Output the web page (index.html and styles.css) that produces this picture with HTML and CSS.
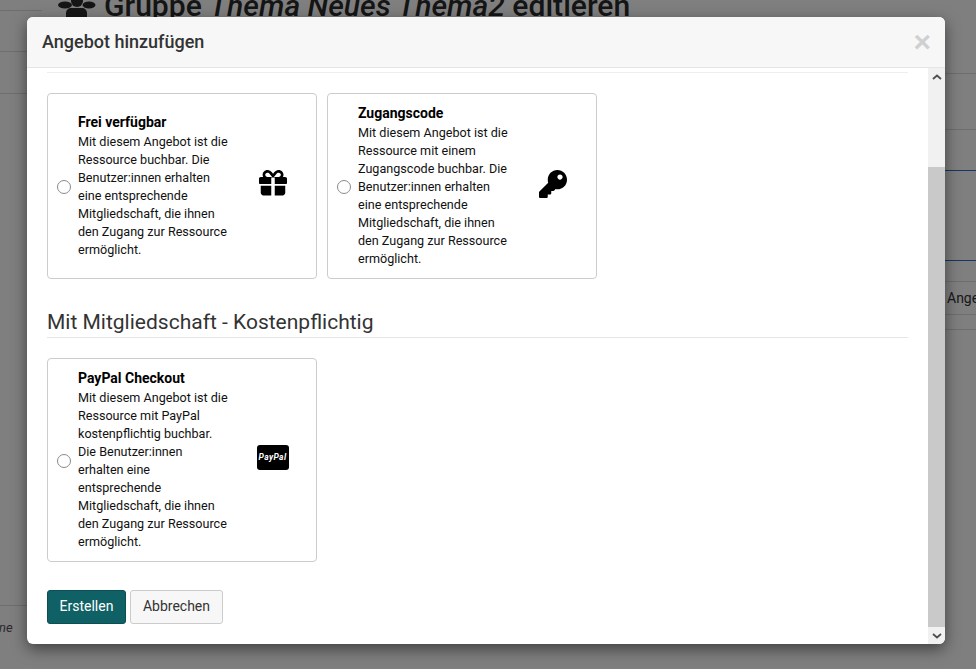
FILE: index.html
```html
<!DOCTYPE html>
<html lang="de">
<head>
<meta charset="utf-8">
<title>Angebot hinzufügen</title>
<link rel="stylesheet" href="styles.css">
</head>
<body>
<div class="page">
  <div class="page-left">
    <div class="left-rule top"></div>
    <div class="left-rule first"></div>
    <div class="left-rule second"></div>
    <div class="left-foot"><span class="foot-text">ne</span></div>
  </div>
  <div class="page-main">
    <h1 class="page-title">
      <svg class="title-icon" viewBox="0 0 39 18" aria-hidden="true"><ellipse cx="7" cy="5" rx="7" ry="3.500"/><ellipse cx="31" cy="5" rx="6.500" ry="3.500"/><circle cx="19" cy="1" r="6"/><path d="M8 18v-5c0-3 2.500-5 5-5h11c2.500 0 5 2 5 5v5z"/></svg>
      <span>Gruppe <em>Thema Neues Thema2</em> editieren</span>
    </h1>
  </div>
  <div class="page-right">
    <div class="right-rule r1"></div>
    <div class="right-rule r2"></div>
    <div class="right-blue b1"></div>
    <div class="right-blue b2"></div>
    <div class="right-tab">Angebot</div>
    <div class="right-rule r3"></div>
  </div>
</div>
<div class="backdrop"></div>
<div class="modal" role="dialog">
  <header class="modal-head">
    <h2 class="modal-title">Angebot hinzufügen</h2>
    <span class="modal-close">×</span>
  </header>
  <div class="modal-scroll">
    <div class="modal-body">
      <div class="cut-rule"></div>
      <div class="cards">
        <label class="card">
          <input class="radio" type="radio" name="offer">
          <span class="card-text"><strong>Frei verfügbar</strong>Mit diesem Angebot ist die Ressource buchbar. Die Benutzer:innen erhalten eine entsprechende Mitgliedschaft, die ihnen den Zugang zur Ressource ermöglicht.</span>
          <span class="card-icon">
            <svg class="icon" viewBox="0 0 512 512" aria-hidden="true"><path d="M32 288h192v176h-144c-26.500 0-48-21.500-48-48zM288 464V288h192v128c0 26.500-21.500 48-48 48zM480 128h-42.100c6.200-12.100 10.100-25.500 10.100-40 0-48.500-39.500-88-88-88-41.600 0-68.500 21.300-103 68.300C222.500 21.300 195.600 0 154 0 105.500 0 66 39.500 66 88c0 14.500 3.800 27.900 10.100 40H32c-17.700 0-32 14.300-32 32v80c0 8.800 7.200 16 16 16h208v-120h64v120h208c8.800 0 16-7.200 16-16v-80c0-17.700-14.300-32-32-32zM153.900 128c-22.100 0-40-17.900-40-40s17.900-40 40-40c19.900 0 34.600 3.300 86.100 80zm206.100 0h-86.100c51.400-76.500 65.700-80 86.100-80 22.100 0 40 17.900 40 40s-17.900 40-40 40z"/></svg>
          </span>
        </label>
        <label class="card">
          <input class="radio" type="radio" name="offer">
          <span class="card-text"><strong>Zugangscode</strong>Mit diesem Angebot ist die Ressource mit einem Zugangscode buchbar. Die Benutzer:innen erhalten eine entsprechende Mitgliedschaft, die ihnen den Zugang zur Ressource ermöglicht.</span>
          <span class="card-icon">
            <svg class="icon" viewBox="0 0 512 512" aria-hidden="true"><path d="M512 176c0 97.200-78.800 176-176 176-11.200 0-22.200-1.100-32.800-3.100l-24 27c-4.600 5.100-11.100 8.100-18 8.100H224v40c0 13.300-10.700 24-24 24h-40v40c0 13.300-10.700 24-24 24H24c-13.300 0-24-10.700-24-24v-78c0-6.400 2.500-12.500 7-17l161.800-161.800C163 216.600 160 196.700 160 176 160 78.800 238.800 0 336 0s176 78.800 176 176zM336 128c0 26.500 21.500 48 48 48s48-21.500 48-48-21.500-48-48-48-48 21.500-48 48z" fill-rule="evenodd"/></svg>
          </span>
        </label>
      </div>
      <h3 class="section-title">Mit Mitgliedschaft - Kostenpflichtig</h3>
      <div class="cards">
        <label class="card">
          <input class="radio" type="radio" name="offer">
          <span class="card-text"><strong>PayPal Checkout</strong>Mit diesem Angebot ist die Ressource mit PayPal kostenpflichtig buchbar. Die Benutzer:innen erhalten eine entsprechende Mitgliedschaft, die ihnen den Zugang zur Ressource ermöglicht.</span>
          <span class="card-icon">
            <span class="paypal">PayPal</span>
          </span>
        </label>
      </div>
      <div class="actions">
        <button class="btn btn-primary" type="button">Erstellen</button>
        <button class="btn btn-default" type="button">Abbrechen</button>
      </div>
    </div>
    <div class="scrollbar" aria-hidden="true">
      <div class="sb-btn"><svg viewBox="0 0 10 6"><path d="M1 5l4-3.500L9 5" fill="none" stroke="#505050" stroke-width="1.800"/></svg></div>
      <div class="sb-space"></div>
      <div class="sb-thumb"></div>
      <div class="sb-btn"><svg viewBox="0 0 10 6"><path d="M1 1l4 3.500L9 1" fill="none" stroke="#505050" stroke-width="1.800"/></svg></div>
    </div>
  </div>
</div>
</body>
</html>
```
FILE: styles.css
```css
* { box-sizing: border-box; }
html, body { margin: 0; height: 669px; overflow: hidden; }
body { font-family: Roboto, "Liberation Sans", sans-serif; background: #fff; color: #333; }

.page { height: 669px; display: flex; }
.page-left { width: 42px; position: relative; }
.page-main { flex: 1; padding: 0 0 0 16px; overflow: hidden; }
.page-right { width: 46px; position: relative; overflow: hidden; }

.left-rule, .right-rule { position: absolute; height: 1px; background: #ddd; left: 0; right: 0; }
.left-rule.top { top: 10px; }
.left-rule.first { top: 51px; }
.left-rule.second { top: 93px; }
.left-foot { position: absolute; top: 605px; left: 0; right: 0; border-top: 1px solid #ddd; padding: 11px 0 0; }
.foot-text { font-size: 13px; font-style: italic; color: #555; margin-left: -1px; }

.right-rule.r1 { top: 73px; }
.right-rule.r2 { top: 129px; }
.right-rule.r3 { top: 329px; }
.right-blue { position: absolute; left: 0; right: 0; height: 1px; background: #2d6fd0; }
.right-blue.b1 { top: 170px; }
.right-blue.b2 { top: 260px; }
.right-tab { position: absolute; top: 281px; left: 0; width: 46px; height: 34px; border-top: 1px solid #ddd; border-bottom: 1px solid #ddd; font-size: 14px; line-height: 32px; white-space: nowrap; padding-left: 17px; overflow: hidden; }

.page-title { margin: -12px 0 0; display: flex; gap: 7px; font-size: 30.1px; font-weight: 500; line-height: 36px; color: #2b2b2b; white-space: nowrap; }
.page-title em { font-weight: 500; }
.title-icon { width: 39px; height: 18px; margin-top: 12px; fill: #2b2b2b; flex: none; }

.backdrop { position: absolute; inset: 0; background: rgba(0, 0, 0, .5); }

.modal { position: absolute; left: 27px; top: 17px; width: 918px; height: 627px; background: #fff; border-radius: 6px; box-shadow: 0 5px 15px rgba(0, 0, 0, .5); display: flex; flex-direction: column; overflow: hidden; }
.modal-head { height: 51px; flex: none; display: flex; align-items: center; justify-content: space-between; padding: 0 14px 0 15px; background: #f7f7f7; border-bottom: 1px solid #e5e5e5; }
.modal-title { margin: 0; font-size: 18px; font-weight: 500; color: #333; line-height: 20px; }
.modal-close { font-size: 30px; font-weight: 700; line-height: 1; color: #d0d0d0; font-family: "Liberation Sans", sans-serif; }

.modal-scroll { flex: 1; min-height: 0; display: flex; }
.modal-body { flex: 1; padding: 4px 20px 0; }
.cut-rule { height: 1px; background: #eee; }
.cards { display: flex; gap: 10px; align-items: stretch; }
.cut-rule + .cards { margin-top: 20px; }
.card { width: 270px; display: flex; align-items: center; padding: 10px 0 10px 9px; border: 1px solid #ccc; border-radius: 4px; background: #fff; }
.radio { appearance: none; width: 14px; height: 14px; flex: none; margin: 0 7px 0 0; border: 1px solid #8a8a8a; border-radius: 50%; background: #fff; position: relative; top: 1px; }
.card-text { width: 151px; flex: none; font-size: 12.6px; line-height: 18px; color: #111; }
.card-text strong { display: block; font-size: 14px; line-height: 18px; margin-bottom: 2px; font-weight: 700; color: #000; }
.card-icon { flex: 1; display: flex; justify-content: center; align-items: center; padding-bottom: 5px; }
.icon { width: 28px; height: 28px; fill: #000; display: block; }
.paypal { display: block; width: 32px; height: 25px; border-radius: 3px; background: #000; color: #fff; font-size: 8.5px; font-weight: 700; font-style: italic; letter-spacing: .4px; line-height: 25px; text-align: center; }

.section-title { margin: 30px 0 20px; padding-bottom: 2px; height: 29px; font-size: 21px; font-weight: 400; line-height: 26px; color: #333; border-bottom: 1px solid #e5e5e5; }
.actions { margin-top: 28px; display: flex; gap: 4px; }
.btn { height: 34px; padding: 0 12px 2px; font-family: Roboto, sans-serif; font-size: 14px; border-radius: 3px; border: 1px solid; }
.btn-primary { padding: 0 11.5px 2px; background: #0f6165; border-color: #0b4f52; color: #fff; }
.btn-default { background: #f7f7f7; border-color: #ccc; color: #333; }

.scrollbar { width: 17px; flex: none; display: flex; flex-direction: column; background: #f1f1f1; }
.sb-btn { height: 17px; flex: none; display: flex; align-items: center; justify-content: center; }
.sb-btn svg { width: 10px; height: 6px; }
.sb-space { height: 82px; flex: none; }
.sb-thumb { flex: 1; background: #c9c9c9; }
```
